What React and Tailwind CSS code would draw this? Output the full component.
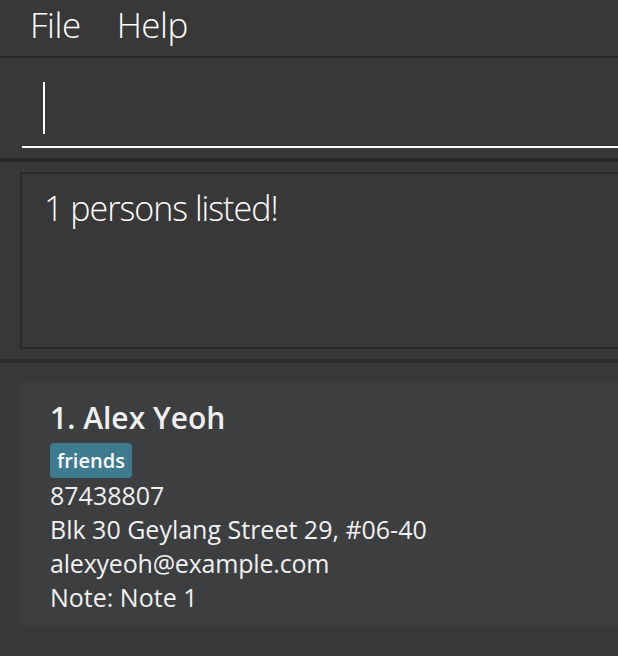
import React from 'react';

const font = { fontFamily: '"Open Sans", "Noto Sans", sans-serif' };

function MenuBar() {
    return (
        <div className="h-[58px] flex items-center gap-[36px] pl-[30px] bg-[#383838] border-b-2 border-[#2b2b2b]">
            <span className="text-[35px] font-light leading-none tracking-[-0.5px] text-white -mt-[8px]">File</span>
            <span className="text-[35px] font-light leading-none tracking-[-0.5px] text-white -mt-[8px]">Help</span>
        </div>
    );
}

function CommandBox() {
    return (
        <div className="bg-[#383838] pl-[22px] h-[104px] border-b-4 border-[#2b2b2b]">
            <div className="h-[90px] border-b-2 border-white pt-[24px] pl-[21px]">
                <div className="w-[2px] h-[52px] bg-white" />
            </div>
        </div>
    );
}

function ResultDisplay() {
    return (
        <div className="bg-[#383838] pt-[10px] pb-[10px] pl-[20px] border-b-4 border-[#2b2b2b]">
            <div className="h-[177px] border-2 border-[#2b2b2b] pl-[22px] pt-[10px]">
                <p className="text-[34px] font-light leading-[48px] tracking-[-1px] text-white">1 persons listed!</p>
            </div>
        </div>
    );
}

function PersonCard() {
    return (
        <div className="bg-[#3c3e3f] pl-[30px] pt-[17px] pb-[11px] text-[#f0f0f0]">
            <p className="text-[30px] font-semibold leading-[36px]">1. Alex Yeoh</p>
            <div className="flex mt-[7px]">
                <span className="h-[35px] px-[7px] rounded-[4px] bg-[#3e7b91] text-white text-[20px] font-semibold leading-[35px]">
                    friends
                </span>
            </div>
            <div className="text-[25px] leading-[34px]">
                <p>87438807</p>
                <p>Blk 30 Geylang Street 29, #06-40</p>
                <p className="tracking-[-0.2px]">alexyeoh@example.com</p>
                <p>Note: Note 1</p>
            </div>
        </div>
    );
}

export default function App() {
    return (
        <div className="w-[618px] h-[656px] overflow-hidden bg-[#383838]" style={font}>
            <div className="w-[680px]">
                <MenuBar />
                <CommandBox />
                <ResultDisplay />
                {/* Person list */}
                <div className="bg-[#383838] pl-[20px] pt-[20px] h-[300px]">
                    <PersonCard />
                </div>
            </div>
        </div>
    );
}
